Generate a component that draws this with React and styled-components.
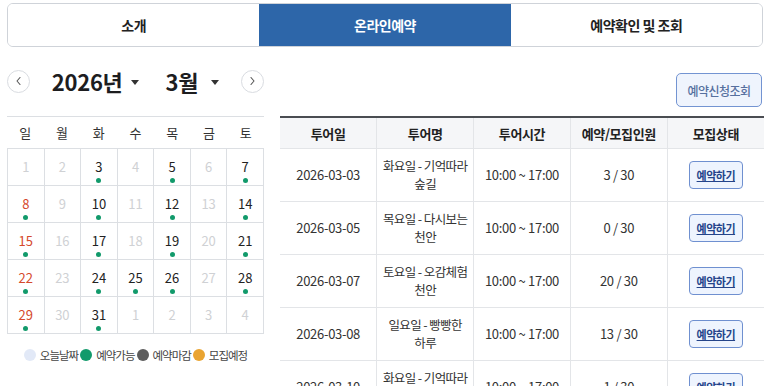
import React from 'react';
import styled, {createGlobalStyle, css} from "styled-components";

const GlobalStyle = createGlobalStyle`
  html, body {
    margin: 0;
    padding: 0;
    background: #fff;
  }
  body {
    font-family: "Noto Sans CJK KR", "Noto Sans", sans-serif;
    color: #222;
    overflow: hidden;
  }
`;

const Page = styled.div`
  padding: 3px 6px 0 7px;
  width: 769px;
  box-sizing: border-box;
`;

const TabBar = styled.nav`
  display: flex;
  height: 44px;
  border: 1px solid #cfd3d9;
  border-radius: 6px;
  overflow: hidden;
  box-sizing: border-box;
`;

const Tab = styled.div`
  flex: 1;
  display: flex;
  align-items: center;
  justify-content: center;
  font-size: 14px;
  font-weight: 700;
  letter-spacing: -0.5px;
  color: ${props => props.active ? "#fff" : "#222"};
  background-color: ${props => props.active ? "#2d66a9" : "#fff"};
`;

const Body = styled.section`
  display: flex;
  gap: 15px;
  align-items: flex-start;
`;

const CalendarColumn = styled.div`
  width: 257px;
  flex-shrink: 0;
  padding-top: 18px;
`;

const MonthNav = styled.div`
  display: flex;
  align-items: center;
  justify-content: space-between;
  height: 32px;
  margin-bottom: 19px;
`;

const ArrowBtn = styled.button`
  width: 23px;
  height: 23px;
  border-radius: 50%;
  border: 1px solid #d9dce1;
  background: #fff;
  padding: 0;
  display: flex;
  align-items: center;
  justify-content: center;
  color: #555;
`;

const Selects = styled.div`
  display: flex;
  align-items: center;
  gap: 27px;
`;

const SelectLabel = styled.div`
  display: flex;
  align-items: center;
  font-size: 22px;
  font-weight: 700;
  color: #1d1d1f;
  letter-spacing: -0.3px;
`;

const Caret = styled.span`
  display: inline-block;
  width: 0;
  height: 0;
  margin-left: ${props => props.gap}px;
  border-left: 4px solid transparent;
  border-right: 4px solid transparent;
  border-top: 5px solid #333;
  margin-top: 2px;
`;

const WeekRow = styled.div`
  display: grid;
  grid-template-columns: repeat(7, 1fr);
  height: 32px;
  border-top: 1px solid #dcdfe3;
  box-sizing: border-box;
`;

const WeekDay = styled.div`
  display: flex;
  align-items: center;
  justify-content: center;
  font-size: 13px;
  color: #333;
`;

const DayGrid = styled.div`
  display: grid;
  grid-template-columns: repeat(7, 1fr);
  border-top: 1px solid #dcdfe3;
  border-left: 1px solid #dcdfe3;
`;

const Day = styled.div`
  height: 37px;
  box-sizing: border-box;
  border-right: 1px solid #dcdfe3;
  border-bottom: 1px solid #dcdfe3;
  display: flex;
  flex-direction: column;
  align-items: center;
  padding-top: 10px;
  font-size: 13px;
  line-height: 16px;
  color: ${props => props.muted ? "#cfd1d4" : props.sunday ? "#d5492c" : "#222"};
`;

const Dot = styled.span`
  width: 5px;
  height: 5px;
  border-radius: 50%;
  margin-top: 3px;
  background-color: #129a6b;
`;

const Legend = styled.div`
  display: flex;
  justify-content: center;
  align-items: center;
  gap: 2px;
  margin-top: 13px;
  font-size: 11.5px;
  color: #444;
  letter-spacing: -1px;
`;

const LegendItem = styled.span`
  display: flex;
  align-items: center;
  gap: 4px;
`;

const LegendDot = styled.span`
  width: 12px;
  height: 12px;
  border-radius: 50%;
  background-color: ${props => props.color};
`;

const TableColumn = styled.div`
  flex: 1;
  padding-top: 26px;
  display: flex;
  flex-direction: column;
  align-items: flex-end;
`;

const LookupBtn = styled.button`
  width: 86px;
  height: 34px;
  border: 1px solid #7394d2;
  border-radius: 5px;
  background-color: #eff4fd;
  color: #56709f;
  font-family: inherit;
  font-size: 12px;
  font-weight: 500;
  letter-spacing: -0.5px;
  margin-bottom: 9px;
  margin-right: 1px;
`;

const Table = styled.table`
  width: 484px;
  margin-right: -1px;
  border-collapse: collapse;
  table-layout: fixed;
  border-top: 2px solid #4a4d52;
`;

const cellBase = css`
  text-align: center;
  border-right: 1px solid #e3e5e8;
  border-bottom: 1px solid #e3e5e8;
  padding: 0 2px;
  &:last-child {
    border-right: none;
  }
`;

const Th = styled.th`
  ${cellBase};
  height: 30px;
  background-color: #f5f6f8;
  font-size: 13px;
  font-weight: 700;
  letter-spacing: -0.4px;
  color: #222;
`;

const Td = styled.td`
  ${cellBase};
  height: 52px;
  font-size: 13px;
  line-height: 16px;
  color: #333;
  letter-spacing: -0.3px;
`;

const NameLine = styled.span`
  display: block;
  white-space: nowrap;
  font-size: 12.5px;
  line-height: 18px;
  letter-spacing: -0.6px;
`;

const ReserveBtn = styled.button`
  width: 54px;
  height: 28px;
  border: 1px solid #6f90d0;
  border-radius: 4px;
  background-color: #eef4fe;
  color: #24448a;
  font-family: inherit;
  font-size: 11px;
  font-weight: 700;
  text-decoration: underline;
  padding: 0;
  letter-spacing: -0.5px;
`;

const Chevron = ({dir}) => (
  <svg width="10" height="10" viewBox="0 0 10 10" fill="none">
    <path d={dir === "left" ? "M6 1.5 L3 5 L6 8.5" : "M4 1.5 L7 5 L4 8.5"}
          stroke="#555" strokeWidth="1.1" strokeLinecap="round" strokeLinejoin="round"/>
  </svg>
);

const available = [3, 5, 7, 8, 10, 12, 14, 15, 17, 19, 21, 22, 24, 25, 26, 28, 29, 31];

// march 2026 starts on sunday, pad with 1-4 of april
const days = [
  ...Array.from({length: 31}, (_, i) => ({n: i + 1, cur: true})),
  ...[1, 2, 3, 4].map(n => ({n, cur: false})),
];

const tours = [
  {date: "2026-03-03", name: ["화요일 - 기억따라", "숲길"], count: "3 / 30"},
  {date: "2026-03-05", name: ["목요일 - 다시보는", "천안"], count: "0 / 30"},
  {date: "2026-03-07", name: ["토요일 - 오감체험", "천안"], count: "20 / 30"},
  {date: "2026-03-08", name: ["일요일 - 빵빵한", "하루"], count: "13 / 30"},
  {date: "2026-03-10", name: ["화요일 - 기억따라", "숲길"], count: "1 / 30"},
];

const App = () => {
  return (
    <Page>
      <GlobalStyle/>
      <TabBar>
        <Tab>소개</Tab>
        <Tab active>온라인예약</Tab>
        <Tab>예약확인 및 조회</Tab>
      </TabBar>

      <Body>
        <CalendarColumn>
          <MonthNav>
            <ArrowBtn aria-label="이전달"><Chevron dir="left"/></ArrowBtn>
            <Selects>
              <SelectLabel>2026년<Caret gap={8}/></SelectLabel>
              <SelectLabel>3월<Caret gap={13}/></SelectLabel>
            </Selects>
            <ArrowBtn aria-label="다음달"><Chevron dir="right"/></ArrowBtn>
          </MonthNav>

          <WeekRow>
            {["일", "월", "화", "수", "목", "금", "토"].map(d => <WeekDay key={d}>{d}</WeekDay>)}
          </WeekRow>

          <DayGrid>
            {days.map((d, i) => {
              const open = d.cur && available.includes(d.n);
              return (
                <Day key={i} muted={!open} sunday={i % 7 === 0}>
                  {d.n}
                  {open && <Dot/>}
                </Day>
              );
            })}
          </DayGrid>

          <Legend>
            <LegendItem><LegendDot color="#e2e9f7"/>오늘날짜</LegendItem>
            <LegendItem><LegendDot color="#129a6b"/>예약가능</LegendItem>
            <LegendItem><LegendDot color="#5d5d5d"/>예약마감</LegendItem>
            <LegendItem><LegendDot color="#e9a431"/>모집예정</LegendItem>
          </Legend>
        </CalendarColumn>

        <TableColumn>
          <LookupBtn>예약신청조회</LookupBtn>
          <Table>
            <thead>
              <tr>
                <Th>투어일</Th>
                <Th>투어명</Th>
                <Th>투어시간</Th>
                <Th>예약/모집인원</Th>
                <Th>모집상태</Th>
              </tr>
            </thead>
            <tbody>
              {tours.map(t => (
                <tr key={t.date}>
                  <Td>{t.date}</Td>
                  <Td>{t.name.map(line => <NameLine key={line}>{line}</NameLine>)}</Td>
                  <Td>10:00 ~ 17:00</Td>
                  <Td>{t.count}</Td>
                  <Td><ReserveBtn>예약하기</ReserveBtn></Td>
                </tr>
              ))}
            </tbody>
          </Table>
        </TableColumn>
      </Body>
    </Page>
  );
}

export default App;
